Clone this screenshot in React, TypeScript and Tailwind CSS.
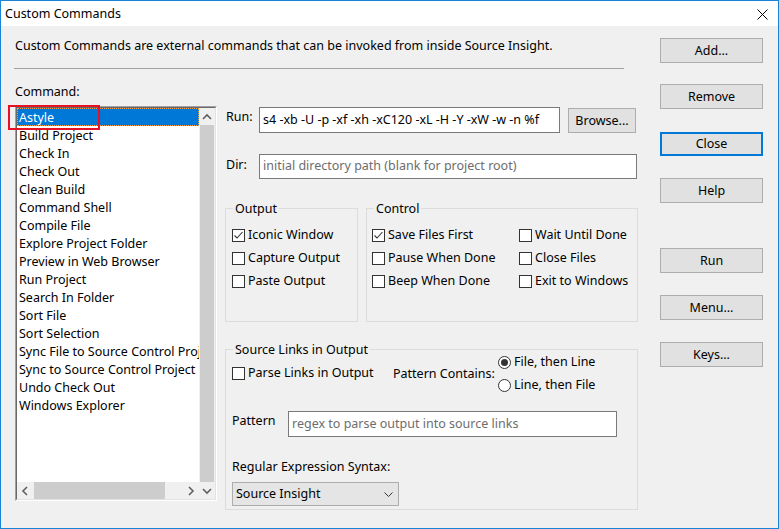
import React from "react";

const FONT = { fontFamily: '"Noto Sans", "Open Sans", sans-serif' };

const commands = [
    "Astyle",
    "Build Project",
    "Check In",
    "Check Out",
    "Clean Build",
    "Command Shell",
    "Compile File",
    "Explore Project Folder",
    "Preview in Web Browser",
    "Run Project",
    "Search In Folder",
    "Sort File",
    "Sort Selection",
    "Sync File to Source Control Project",
    "Sync to Source Control Project",
    "Undo Check Out",
    "Windows Explorer",
];

function Chevron({ dir }: { dir: "up" | "down" | "left" | "right" }) {
    const pts = {
        up: "1,6 5,2 9,6",
        down: "1,2 5,6 9,2",
        left: "6,1 2,5 6,9",
        right: "3,1 7,5 3,9",
    }[dir];
    const vertical = dir === "up" || dir === "down";
    return (
        <svg width={vertical ? 10 : 9} height={vertical ? 8 : 10} viewBox={vertical ? "0 0 10 8" : "0 0 9 10"}>
            <polyline points={pts} fill="none" stroke="#606060" strokeWidth="1.6" />
        </svg>
    );
}

function Checkbox({ label, checked = false }: { label: string; checked?: boolean }) {
    return (
        <div className="flex h-[18px] items-center gap-[3px] whitespace-nowrap">
            <span className="flex h-[13px] w-[13px] shrink-0 items-center justify-center border border-[#333333] bg-white">
                {checked && (
                    <svg width="11" height="11" viewBox="0 0 11 11">
                        <polyline points="1.5,5.5 4,8 9.5,2" fill="none" stroke="#333333" strokeWidth="1.1" />
                    </svg>
                )}
            </span>
            <span>{label}</span>
        </div>
    );
}

function Radio({ label, checked = false }: { label: string; checked?: boolean }) {
    return (
        <div className="flex h-[18px] items-center gap-[3px] whitespace-nowrap">
            <span className="flex h-[13px] w-[13px] shrink-0 items-center justify-center rounded-full border border-[#333333] bg-white">
                {checked && <span className="h-[7px] w-[7px] rounded-full bg-[#333333]" />}
            </span>
            <span>{label}</span>
        </div>
    );
}

function Button({ label, focused = false, className = "" }: { label: string; focused?: boolean; className?: string }) {
    return (
        <div
            className={`flex h-[25px] w-[103px] items-center justify-center bg-[#e1e1e1] pt-px ${
                focused ? "border-2 border-[#0078d7]" : "border border-[#adadad]"
            } ${className}`}
        >
            {label}
        </div>
    );
}

function GroupBox({ title, className = "", children }: { title: string; className?: string; children: React.ReactNode }) {
    return (
        <fieldset className={`border border-[#dcdcdc] ${className}`}>
            <legend className="ml-[7px] px-[2px] pt-px leading-[18px]">{title}</legend>
            {children}
        </fieldset>
    );
}

function ListBox() {
    return (
        <div className="h-[395px] w-[202px] shrink-0 border border-b-white border-l-[#a0a0a0] border-r-white border-t-[#a0a0a0]">
            <div className="flex h-full w-full border border-b-[#e3e3e3] border-l-[#696969] border-r-[#e3e3e3] border-t-[#696969] bg-white">
                <div className="flex min-w-0 flex-1 flex-col">
                    <div className="flex-1 overflow-hidden">
                        {commands.map((c, i) => (
                            <div
                                key={c}
                                className={`h-[18px] whitespace-nowrap pl-[1px] pt-px leading-[16px] ${
                                    i === 0
                                        ? "border border-dotted border-[#f7a04a] bg-[#0078d7] text-white"
                                        : "border border-transparent"
                                }`}
                            >
                                {c}
                            </div>
                        ))}
                    </div>
                    <div className="flex h-[17px] items-center bg-[#f0f0f0]">
                        <div className="flex w-[17px] justify-center">
                            <Chevron dir="left" />
                        </div>
                        <div className="h-[17px] w-[131px] bg-[#cdcdcd]" />
                        <div className="flex-1" />
                        <div className="flex w-[17px] justify-center">
                            <Chevron dir="right" />
                        </div>
                    </div>
                </div>
                <div className="flex w-[16px] flex-col bg-[#f0f0f0]">
                    <div className="flex h-[17px] items-center justify-center">
                        <Chevron dir="up" />
                    </div>
                    <div className="mx-[1px] flex-1 bg-[#cdcdcd]" />
                    <div className="flex h-[17px] items-center justify-center">
                        <Chevron dir="down" />
                    </div>
                </div>
            </div>
        </div>
    );
}

export default function App() {
    return (
        <div className="relative h-[529px] w-[779px] overflow-hidden text-[12.5px] text-black" style={FONT}>
            <div className="flex h-full w-full flex-col border border-[#1883d7] bg-[#f0f0f0]">
                <div className="flex h-[25px] items-center justify-between bg-white pl-[4px] pr-[10px] pt-px">
                    <span>Custom Commands</span>
                    <svg width="11" height="11" viewBox="0 0 11 11">
                        <path d="M0.5 0.5 L10.5 10.5 M10.5 0.5 L0.5 10.5" stroke="#000" strokeWidth="1" />
                    </svg>
                </div>
                <div className="flex flex-1">
                    <div className="flex w-[645px] flex-col pl-[14px]">
                        <div className="mt-[11px] leading-[18px]">
                            Custom Commands are external commands that can be invoked from inside Source Insight.
                        </div>
                        <div className="-ml-px mt-[13px] h-px w-[610px] bg-[#a0a0a0]" />
                        <div className="mt-[14px] leading-[18px]">Command:</div>
                        <div className="mt-[5px] flex">
                            <ListBox />
                            <div className="ml-[8px] flex w-[413px] flex-col">
                                <div className="flex items-start">
                                    <span className="mt-[2px] w-[34px] pl-px leading-[18px]">Run:</span>
                                    <div className="mt-[1px] flex h-[26px] w-[301px] items-center overflow-hidden whitespace-nowrap border border-[#7a7a7a] bg-white pl-[3px]">
                                        s4 -xb -U -p -xf -xh -xC120 -xL -H -Y -xW -w -n %f
                                    </div>
                                    <Button label="Browse..." className="ml-[8px] mt-[2px] !w-[68px]" />
                                </div>
                                <div className="mt-[21px] flex items-start">
                                    <span className="mt-[2px] w-[34px] pl-px leading-[18px]">Dir:</span>
                                    <div className="flex h-[25px] w-[378px] items-center whitespace-nowrap border border-[#7a7a7a] bg-white pl-[3px] text-[#6d6d6d]">
                                        initial directory path (blank for project root)
                                    </div>
                                </div>
                                <div className="mt-[20px] flex">
                                    <GroupBox title="Output" className="h-[123px] w-[133px]">
                                        <div className="mt-[8px] flex flex-col gap-[5px] pl-[6px]">
                                            <Checkbox label="Iconic Window" checked />
                                            <Checkbox label="Capture Output" />
                                            <Checkbox label="Paste Output" />
                                        </div>
                                    </GroupBox>
                                    <GroupBox title="Control" className="ml-[8px] h-[123px] w-[272px]">
                                        <div className="mt-[8px] flex pl-[5px]">
                                            <div className="flex w-[147px] flex-col gap-[5px]">
                                                <Checkbox label="Save Files First" checked />
                                                <Checkbox label="Pause When Done" />
                                                <Checkbox label="Beep When Done" />
                                            </div>
                                            <div className="flex flex-col gap-[5px]">
                                                <Checkbox label="Wait Until Done" />
                                                <Checkbox label="Close Files" />
                                                <Checkbox label="Exit to Windows" />
                                            </div>
                                        </div>
                                    </GroupBox>
                                </div>
                                <GroupBox title="Source Links in Output" className="mt-[18px] h-[170px] w-[413px]">
                                    <div className="-mt-[6px] flex h-[41px] items-center pl-[6px]">
                                        <div className="w-[161px]">
                                            <Checkbox label="Parse Links in Output" />
                                        </div>
                                        <span className="w-[105px] whitespace-nowrap leading-[18px]">Pattern Contains:</span>
                                        <div className="flex flex-col gap-[5px]">
                                            <Radio label="File, then Line" checked />
                                            <Radio label="Line, then File" />
                                        </div>
                                    </div>
                                    <div className="mt-[17px] flex items-start pl-[6px]">
                                        <span className="w-[56px] pt-px leading-[18px]">Pattern</span>
                                        <div className="flex h-[26px] w-[329px] items-center whitespace-nowrap border border-[#7a7a7a] bg-white pl-[3px] text-[#6d6d6d]">
                                            regex to parse output into source links
                                        </div>
                                    </div>
                                    <div className="mt-[21px] pl-[6px] leading-[18px]">Regular Expression Syntax:</div>
                                    <div className="ml-[6px] mt-[6px] flex h-[24px] w-[167px] items-center justify-between border border-[#adadad] bg-[#e5e5e5] pl-[3px] pr-[5px] pt-px">
                                        <span>Source Insight</span>
                                        <svg width="9" height="6" viewBox="0 0 9 6">
                                            <polyline points="0.5,0.5 4.5,4.5 8.5,0.5" fill="none" stroke="#333" strokeWidth="1" />
                                        </svg>
                                    </div>
                                </GroupBox>
                            </div>
                        </div>
                    </div>
                    <div className="flex flex-col pl-[14px]">
                        <Button label="Add..." className="mt-[12px]" />
                        <Button label="Remove" className="mt-[21px]" />
                        <Button label="Close" focused className="mt-[23px] !h-[24px]" />
                        <Button label="Help" className="mt-[22px]" />
                        <Button label="Run" className="mt-[45px]" />
                        <Button label="Menu..." className="mt-[22px]" />
                        <Button label="Keys..." className="mt-[22px]" />
                    </div>
                </div>
            </div>
            <div className="absolute left-[8px] top-[105px] h-[25px] w-[92px] border-2 border-[#e81123]" />
        </div>
    );
}
